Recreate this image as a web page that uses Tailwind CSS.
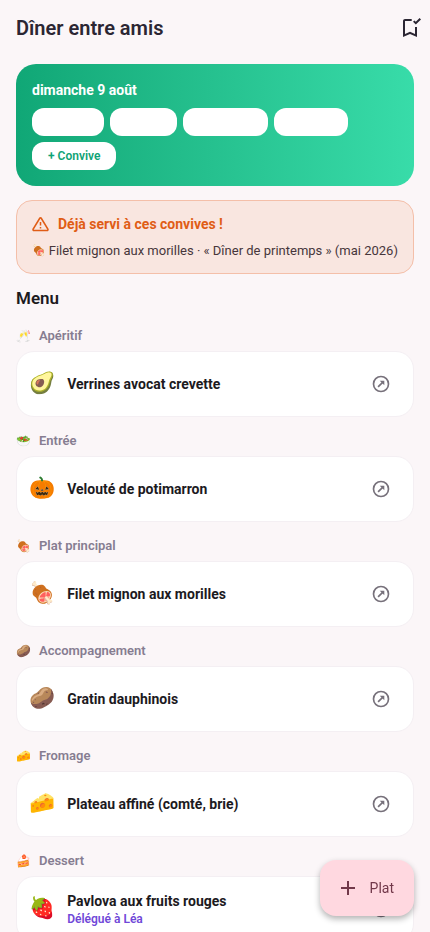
<!DOCTYPE html>
<html lang="fr">
<head>
    <meta charset="UTF-8">
    <meta name="viewport" content="width=device-width, initial-scale=1.0">
    <title>Dîner entre amis</title>
    <script src="https://cdn.jsdelivr.net/npm/@tailwindcss/browser@4"></script>
</head>
<body class="flex h-screen flex-col bg-[#fbf6f8] font-[Roboto,'Noto_Color_Emoji',sans-serif] text-[#1c1a1e]">

<!-- Shared icons -->
<svg class="hidden">
    <symbol id="open" viewBox="0 0 24 24">
        <circle cx="12" cy="12" r="9" fill="none" stroke="currentColor" stroke-width="2"/>
        <path d="M8.500 15.500 14 10" fill="none" stroke="currentColor" stroke-width="2"/>
        <path d="M10.500 8H16v5.500z" fill="currentColor"/>
    </symbol>
</svg>

<header class="flex h-14 shrink-0 items-center justify-between pr-2 pl-4">
    <h1 class="text-xl font-semibold text-[#2b2633]">Dîner entre amis</h1>
    <button aria-label="Enregistrer le menu" class="text-[#2b2633]">
        <svg class="size-6" viewBox="0 0 24 24" fill="currentColor"><path d="M19 21l-7-3-7 3V5c0-1.100.9-2 2-2h7c-.6 1-.6 1 0 2H7v13l5-2.200 5 2.200v-7h2zM17.800 8.600 15 5.800l1.400-1.400 1.400 1.400L21.600 2 23 3.400z"/></svg>
    </button>
</header>

<main class="flex-1 overflow-y-auto px-4 pt-2 pb-24">
    <section class="rounded-[20px] bg-linear-to-r from-[#10a776] to-[#38dca9] p-4">
        <h2 class="text-sm leading-5 font-bold text-white">dimanche 9 août</h2>
        <div class="mt-2 flex flex-wrap gap-[6px]">
            <button aria-label="Convive 1" class="h-7 w-18 rounded-xl bg-white"></button>
            <button aria-label="Convive 2" class="h-7 w-[67px] rounded-xl bg-white"></button>
            <button aria-label="Convive 3" class="h-7 w-[85px] rounded-xl bg-white"></button>
            <button aria-label="Convive 4" class="h-7 w-[74px] rounded-xl bg-white"></button>
            <button class="h-7 rounded-xl bg-white px-4 text-xs font-semibold text-[#0fa375]">+ Convive</button>
        </div>
    </section>

    <section class="mt-[14px] rounded-2xl border border-[#f4bfa9] bg-[#f9e6e0] px-[15px] pt-[13px] pb-3">
        <h2 class="flex items-center gap-2 text-sm leading-5 font-bold text-[#e05d16]">
            <svg class="size-[18px] shrink-0" viewBox="0 0 18 18" fill="none" stroke="currentColor" stroke-width="1.500" stroke-linejoin="round"><path d="M7.900 3 1.200 14c-.5.8 0 1.600.9 1.600h12.800c.9 0 1.400-.8.9-1.600L9.100 3c-.3-.5-.9-.5-1.200 0z"/><path d="M8.500 7v3.500M8.500 12v1.500"/></svg>
            Déjà servi à ces convives !
        </h2>
        <p class="mt-[7px] flex items-center gap-[3px] text-[13px] leading-5 whitespace-nowrap text-[#47363b]"><span class="text-[11px]">🍖</span>Filet mignon aux morilles · « Dîner de printemps » (mai 2026)</p>
    </section>

    <h2 class="mt-3 text-[17px] leading-6 font-semibold">Menu</h2>

    <section class="mt-4">
        <h3 class="flex items-center gap-2 text-[13px] leading-5 font-semibold text-[#867d91]"><span class="text-xs leading-5">🥂</span>Apéritif</h3>
        <article class="mt-[5px] flex h-[66px] items-center gap-3 rounded-[18px] border border-[#f4eff3] bg-white px-3">
            <span class="text-[21px]">🥑</span>
            <h4 class="flex-1 text-sm font-bold">Verrines avocat crevette</h4>
            <button aria-label="Ouvrir" class="p-[10px] text-[#77717b]"><svg class="size-5"><use href="#open"/></svg></button>
        </article>
    </section>

    <section class="mt-[14px]">
        <h3 class="flex items-center gap-2 text-[13px] leading-5 font-semibold text-[#867d91]"><span class="text-xs leading-5">🥗</span>Entrée</h3>
        <article class="mt-[5px] flex h-[66px] items-center gap-3 rounded-[18px] border border-[#f4eff3] bg-white px-3">
            <span class="text-[21px]">🎃</span>
            <h4 class="flex-1 text-sm font-bold">Velouté de potimarron</h4>
            <button aria-label="Ouvrir" class="p-[10px] text-[#77717b]"><svg class="size-5"><use href="#open"/></svg></button>
        </article>
    </section>

    <section class="mt-[14px]">
        <h3 class="flex items-center gap-2 text-[13px] leading-5 font-semibold text-[#867d91]"><span class="text-xs leading-5">🍖</span>Plat principal</h3>
        <article class="mt-[5px] flex h-[66px] items-center gap-3 rounded-[18px] border border-[#f4eff3] bg-white px-3">
            <span class="text-[21px]">🍖</span>
            <h4 class="flex-1 text-sm font-bold">Filet mignon aux morilles</h4>
            <button aria-label="Ouvrir" class="p-[10px] text-[#77717b]"><svg class="size-5"><use href="#open"/></svg></button>
        </article>
    </section>

    <section class="mt-[14px]">
        <h3 class="flex items-center gap-2 text-[13px] leading-5 font-semibold text-[#867d91]"><span class="text-xs leading-5">🥔</span>Accompagnement</h3>
        <article class="mt-[5px] flex h-[66px] items-center gap-3 rounded-[18px] border border-[#f4eff3] bg-white px-3">
            <span class="text-[21px]">🥔</span>
            <h4 class="flex-1 text-sm font-bold">Gratin dauphinois</h4>
            <button aria-label="Ouvrir" class="p-[10px] text-[#77717b]"><svg class="size-5"><use href="#open"/></svg></button>
        </article>
    </section>

    <section class="mt-[14px]">
        <h3 class="flex items-center gap-2 text-[13px] leading-5 font-semibold text-[#867d91]"><span class="text-xs leading-5">🧀</span>Fromage</h3>
        <article class="mt-[5px] flex h-[66px] items-center gap-3 rounded-[18px] border border-[#f4eff3] bg-white px-3">
            <span class="text-[21px]">🧀</span>
            <h4 class="flex-1 text-sm font-bold">Plateau affiné (comté, brie)</h4>
            <button aria-label="Ouvrir" class="p-[10px] text-[#77717b]"><svg class="size-5"><use href="#open"/></svg></button>
        </article>
    </section>

    <section class="mt-[14px]">
        <h3 class="flex items-center gap-2 text-[13px] leading-5 font-semibold text-[#867d91]"><span class="text-xs leading-5">🍰</span>Dessert</h3>
        <article class="mt-[5px] flex h-[66px] items-center gap-3 rounded-[18px] border border-[#f4eff3] bg-white px-3">
            <span class="text-[21px]">🍓</span>
            <div class="flex-1">
                <h4 class="text-sm leading-5 font-bold">Pavlova aux fruits rouges</h4>
                <p class="text-xs leading-4 font-semibold text-[#7048d8]">Délégué à Léa</p>
            </div>
            <button aria-label="Ouvrir" class="p-[10px] text-[#77717b]"><svg class="size-5"><use href="#open"/></svg></button>
        </article>
    </section>
</main>

<button class="fixed right-4 bottom-4 flex h-14 items-center gap-[10px] rounded-2xl bg-[#ffd8e0] pr-5 pl-4 text-sm text-[#72384a] shadow-[0_3px_6px_rgba(0,0,0,0.3)]">
    <svg class="size-6" viewBox="0 0 24 24" fill="none" stroke="currentColor" stroke-width="2"><path d="M12 5v14M5 12h14"/></svg>
    Plat
</button>

</body>
</html>
